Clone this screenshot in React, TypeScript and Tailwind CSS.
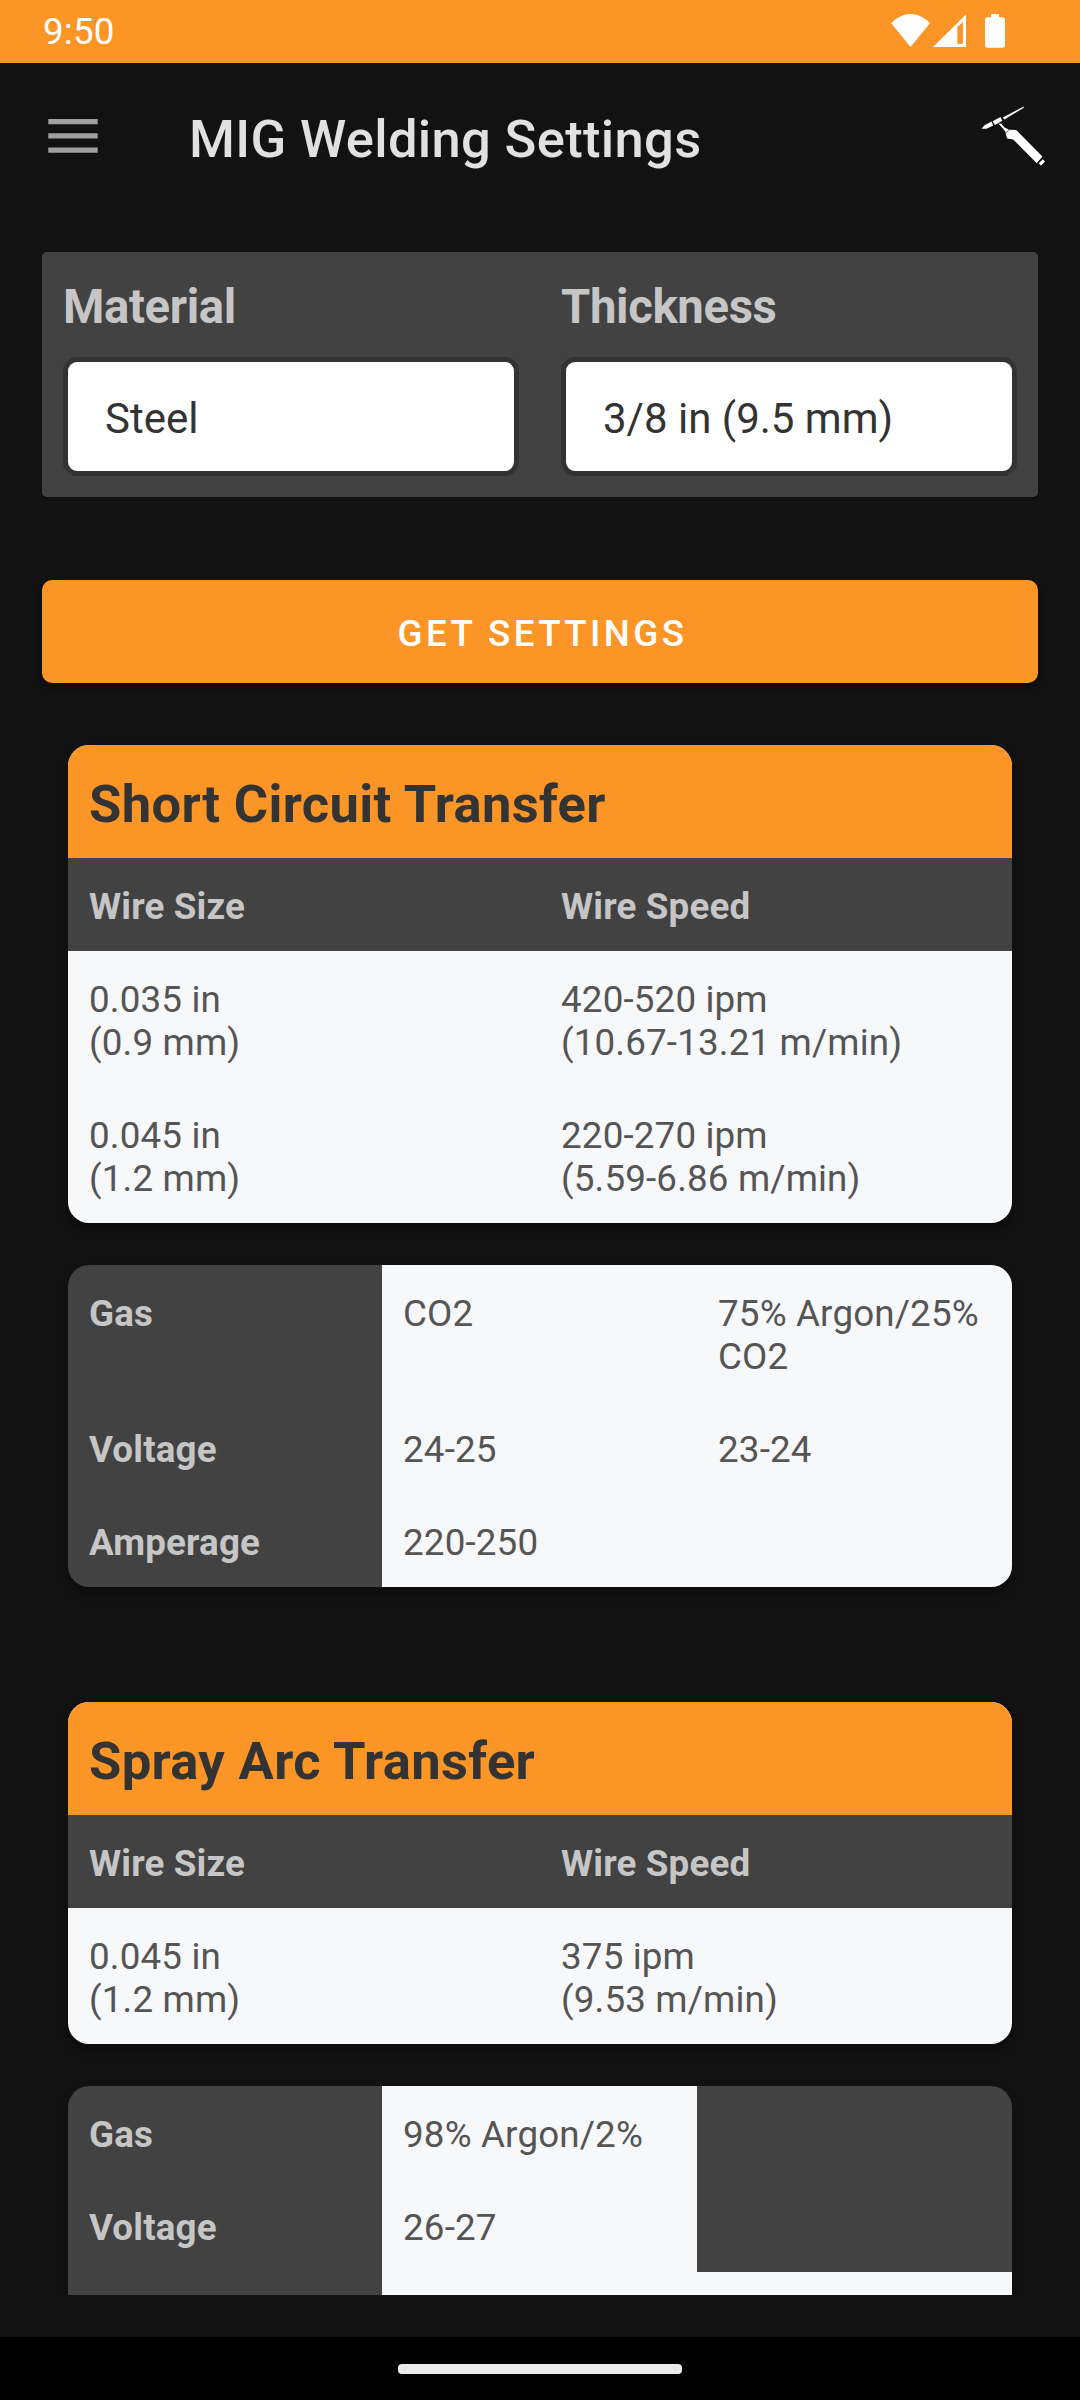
type WireRow = { size: string[]; speed: string[] };
type DetailRow = { label: string; values: (string | null)[] };

const shortCircuitWire: WireRow[] = [
  { size: ["0.035 in", "(0.9 mm)"], speed: ["420-520 ipm", "(10.67-13.21 m/min)"] },
  { size: ["0.045 in", "(1.2 mm)"], speed: ["220-270 ipm", "(5.59-6.86 m/min)"] },
];

const shortCircuitDetails: DetailRow[] = [
  { label: "Gas", values: ["CO2", "75% Argon/25% CO2"] },
  { label: "Voltage", values: ["24-25", "23-24"] },
  { label: "Amperage", values: ["220-250", ""] },
];

const sprayArcWire: WireRow[] = [
  { size: ["0.045 in", "(1.2 mm)"], speed: ["375 ipm", "(9.53 m/min)"] },
];

// null leaves the cell unfilled so the card colour shows through
const sprayArcDetails: DetailRow[] = [
  { label: "Gas", values: ["98% Argon/2%", null] },
  { label: "Voltage", values: ["26-27", null] },
  { label: "", values: ["", ""] },
];

function StatusBar() {
  return (
    <div className="flex h-[63px] shrink-0 items-start justify-between bg-[#fb9526] pl-[43px] text-white">
      <span className="pt-[10px] text-[36.75px] leading-[43px] tracking-[0.2px]">9:50</span>
      <svg className="h-[63px] w-[220px]" viewBox="0 0 220 63" fill="currentColor">
        <path d="M50.5 47 31.2 23.2C36 18 43 14 50.5 14S65 18 70 23.2Z" />
        <path fillRule="evenodd" d="M73 47 106 14.5V47ZM97.3 27V43.7H103V22Z" />
        <path d="M131 14h8v3.2h3.2a2.8 2.8 0 0 1 2.8 2.8v25a2.8 2.8 0 0 1-2.8 2.8h-14.4A2.8 2.8 0 0 1 125 45V20a2.8 2.8 0 0 1 2.8-2.8h3.2Z" />
      </svg>
    </div>
  );
}

function TorchIcon() {
  return (
    <svg className="mt-[42px] h-[64px] w-[68px]" viewBox="0 0 68 64" fill="white">
      <path d="M1.5 23.8 4.5 20.2 11.6 16.6 13.2 20.4 6.5 23.8Z" />
      <path d="M12.6 16.2 20.5 12 22.3 15.8 15 20Z" />
      <path d="M22.8 12.4 43.8 1.6V2.8L24.4 14.5Z" />
      <path d="M18.5 18.8 21.2 18.4 24.5 22.5 28.8 24.4 25.9 27.7 23.8 24.5Z" />
      <path d="M25.6 28.4 29.2 24.8 36.2 25 62.4 51.6 56.8 58.2 33.2 34.5 27.2 33.4Z" />
      <path d="M58.8 58.2 62.8 54.2 65 56.5 61 60.8Z" />
    </svg>
  );
}

function AppBar() {
  return (
    <header className="flex h-[189px] shrink-0 items-start">
      <svg className="ml-[48px] mt-[56px] h-[34px] w-[50px]" viewBox="0 0 50 34" fill="#9f9f9f">
        <path d="M.3 0h49.4v5.3H.3ZM.3 14.2h49.4v5.3H.3ZM.3 28.4h49.4v5.3H.3Z" />
      </svg>
      <h1 className="ml-[91px] mt-[45px] flex-1 text-[52.5px] font-medium leading-[62px] tracking-[0.34px] text-[#e1e1e1]">
        MIG Welding Settings
      </h1>
      <div className="mr-[32px]">
        <TorchIcon />
      </div>
    </header>
  );
}

function Field({ label, value }: { label: string; value: string }) {
  return (
    <div className="w-[456px]">
      <div className="text-[47.25px] font-bold leading-[56px] tracking-[-0.35px] text-[#c6c6c6]">{label}</div>
      <div className="mt-[22px] h-[119px] rounded-[14px] border-[5px] border-[#333333] bg-white pl-[37px] pt-[32px] text-[42px] leading-[49px] text-[#333333]">
        {value}
      </div>
    </div>
  );
}

function WireCard({ title, rows }: { title: string; rows: WireRow[] }) {
  return (
    <section className="overflow-hidden rounded-[21px] bg-[#f7f8fa] shadow-[0_6px_10px_rgba(0,0,0,0.35)]">
      <h2 className="bg-[#fb9526] px-[21px] pb-[23px] pt-[28px] text-[52.5px] font-bold leading-[62px] tracking-[0.35px] text-[#333333]">
        {title}
      </h2>
      <div className="grid grid-cols-2 bg-[#424242] font-bold text-[#c6c6c6]">
        <div className="pb-[23px] pl-[21px] pt-[27px]">Wire Size</div>
        <div className="pb-[23px] pl-[21px] pt-[27px]">Wire Speed</div>
      </div>
      {rows.map((row) => (
        <div key={row.size[0]} className="grid grid-cols-2 text-[#555555]">
          {[row.size, row.speed].map((lines) => (
            <div key={lines[0]} className="pb-[23px] pl-[21px] pt-[27px]">
              {lines.map((line) => (
                <div key={line}>{line}</div>
              ))}
            </div>
          ))}
        </div>
      ))}
    </section>
  );
}

function DetailCard({ rows }: { rows: DetailRow[] }) {
  return (
    <section className="mt-[42px] overflow-hidden rounded-[21px] bg-[#424242] shadow-[0_6px_10px_rgba(0,0,0,0.35)]">
      {rows.map((row) => (
        <div key={row.label} className="grid min-h-[93px] grid-cols-[314px_315px_315px]">
          <div className="pb-[23px] pl-[21px] pt-[27px] font-bold text-[#c6c6c6]">{row.label}</div>
          {row.values.map((value, i) =>
            value === null ? (
              <div key={i} />
            ) : (
              <div key={i} className="bg-[#f7f8fa] pb-[23px] pl-[21px] pr-[21px] pt-[27px] text-[#555555]">
                {value}
              </div>
            ),
          )}
        </div>
      ))}
    </section>
  );
}

export default function App() {
  return (
    <div className="flex h-[2400px] w-[1080px] flex-col overflow-hidden bg-[#121212] font-[Roboto,sans-serif]">
      <StatusBar />
      <AppBar />

      <div className="mx-[42px] flex h-[245px] shrink-0 gap-[42px] rounded-[5px] bg-[#424242] pl-[21px] pt-[27px]">
        <Field label="Material" value="Steel" />
        <Field label="Thickness" value="3/8 in (9.5 mm)" />
      </div>

      <button className="mx-[42px] mt-[83px] h-[103px] shrink-0 rounded-[10px] bg-[#fb9526] pl-[5px] pt-[3px] text-[36.75px] font-medium leading-[43px] tracking-[3.4px] text-white shadow-[0_4px_6px_rgba(0,0,0,0.4)]">
        GET SETTINGS
      </button>

      {/* scroll area, the last card runs under its lower edge */}
      <main className="h-[1612px] shrink-0 overflow-hidden px-[68px] pt-[62px] text-[36.75px] leading-[43px] tracking-[0.16px]">
        <WireCard title="Short Circuit Transfer" rows={shortCircuitWire} />
        <DetailCard rows={shortCircuitDetails} />
        <div className="h-[115px]" />
        <WireCard title="Spray Arc Transfer" rows={sprayArcWire} />
        <DetailCard rows={sprayArcDetails} />
      </main>

      <div className="mt-[42px] flex h-[63px] shrink-0 justify-center bg-black pt-[27px]">
        <div className="h-[10px] w-[284px] rounded-[4px] bg-[#ebebeb]" />
      </div>
    </div>
  );
}
